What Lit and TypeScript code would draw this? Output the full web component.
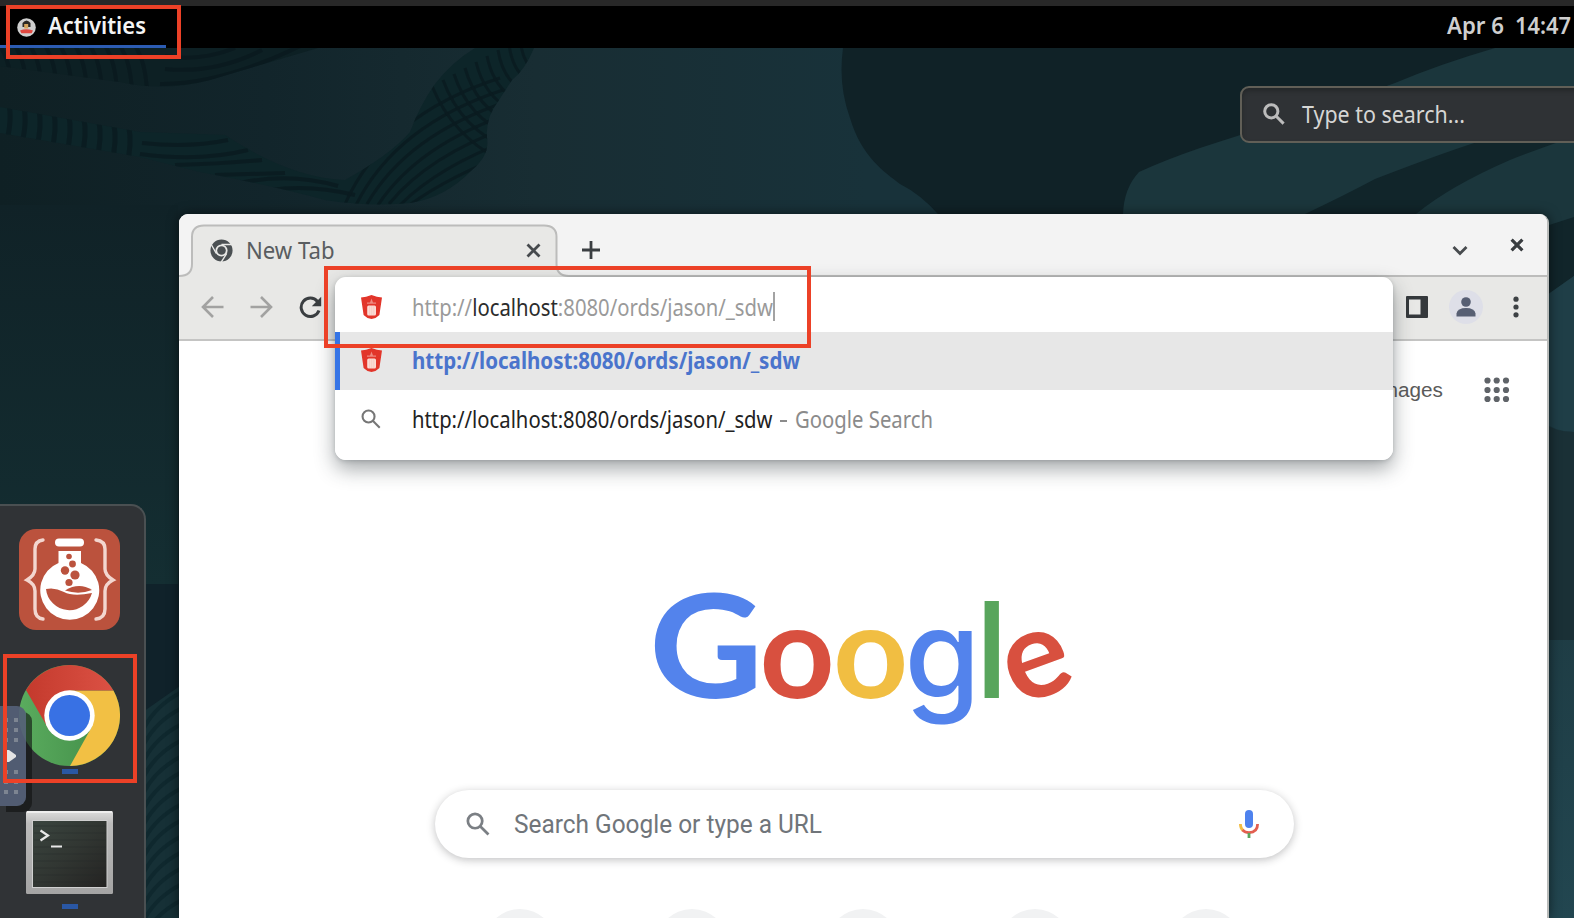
import { LitElement, html, svg, css } from "lit";
import { customElement } from "lit/decorators.js";

const UI = "'Noto Sans', 'Open Sans', sans-serif";

/** One line of text fitted to a given width; its cap height is centred in a 28px box. */
const label = (
  content: unknown,
  width: number,
  size = 23,
  color = "#000",
  weight = 400,
  family = UI
) => html`<svg class="label" width=${width} height="28" viewBox=${`0 0 ${width} 28`}>
  <text x="0" y="22.5" xml:space="preserve" font-family=${family} font-size=${size} font-weight=${weight}
    fill=${color} textLength=${width} lengthAdjust="spacingAndGlyphs">${content}</text></svg>`;

const magnifier = (size: number, color: string, stroke = 2.4) => html`<svg
  width=${size} height=${size} viewBox="0 0 22 22" fill="none" stroke=${color} stroke-width=${stroke}>
  <circle cx="8.3" cy="8.3" r="6.6" /><path d="M13 13l7.6 7.6" />
</svg>`;

const shield = html`<svg width="21" height="24" viewBox="0 0 21 24">
  <path d="M0 2.6Q5 2.2 10.5 0Q16 2.2 21 2.6L18.4 20L14.5 23L10.5 24L6.5 23L2.6 20Z" fill="#e2352a" />
  <path d="M6 7.4h3L10.5 3.6 12 7.4h3v1.4H6z" fill="#ee8a81" />
  <rect x="6.2" y="10.6" width="8.8" height="10" rx="1.5" fill="#fbdcd6" />
  <path d="M8.6 11v9M10.7 11v9M12.8 11v9" stroke="#f6c5bd" stroke-width=".7" />
</svg>`;

const BRAID =
  "M534 48Q525 70 505 85Q500 94 483 106Q522 112 526 138Q510 165 482 175Q455 200 415 203Q370 207 325 200Q270 185 200 172L140 157L0 133V107L140 132L225 135Q290 178 345 180Q390 155 408 132Q420 105 435 84Q452 62 475 48Z";
const BRAID_FILL =
  "M534 48Q525 70 512 80L499 100Q485 118 487 138Q490 155 472 170Q445 198 410 203Q370 207 325 200Q270 185 200 172L140 157L0 133V107L140 132L225 135Q290 178 345 180Q390 155 410 132Q420 105 435 84Q452 62 475 48Z";

@customElement("desk-wallpaper")
export class DeskWallpaper extends LitElement {
  static styles = css`
    :host { position: absolute; inset: 0; }
    svg { display: block; }
  `;
  render() {
    const ribs = Array.from({ length: 13 }, (_, i) => i);
    const waves = Array.from({ length: 9 }, (_, i) => i);
    return html`<svg width="1574" height="918" viewBox="0 0 1574 918">
      <defs>
        <linearGradient id="base" x1="0" y1="0" x2="1" y2="0">
          <stop offset="0" stop-color="#0f2024" /><stop offset=".17" stop-color="#12252b" />
          <stop offset=".34" stop-color="#182d33" /><stop offset=".55" stop-color="#18323a" />
        </linearGradient>
        <linearGradient id="left" x1="0" y1="0" x2="0" y2="1">
          <stop offset="0" stop-color="#102227" /><stop offset="1" stop-color="#142e32" />
        </linearGradient>
        <linearGradient id="right" x1="0" y1="0" x2="0" y2="1">
          <stop offset="0" stop-color="#1a3137" /><stop offset="1" stop-color="#224650" />
        </linearGradient>
        <clipPath id="braid"><path d=${BRAID_FILL} /></clipPath>
        <clipPath id="fringe"><path d="M0 48H318Q260 65 210 80Q165 92 120 82L0 66Z" /></clipPath>
      </defs>
      <rect width="1574" height="918" fill="url(#base)" />
      <rect y="205" width="178" height="380" fill="url(#left)" />
      <path d="M140 584H180V700L140 712Z" fill="#10222a" />
      <path d="M140 714L180 686V918H140Z" fill="#163036" />
      <g stroke="#0f282e" stroke-width="4" fill="none">
        ${Array.from({ length: 14 }, (_, i) => svg`<path d=${`M144 ${728 + i * 16}Q156 ${705 + i * 16} 182 ${692 + i * 16}`} />`)}
      </g>
      <path d="M0 48H318Q260 65 210 80Q165 92 120 82L0 66Z" fill="#0d2024" />
      <g clip-path="url(#fringe)" stroke="#0a191e" stroke-opacity=".8" stroke-width="4" fill="none">
        ${ribs.slice(0, 10).map((i) => svg`<path d=${`M${i * 15} 46Q${i * 15 + 10} 60 ${i * 15 + 12} 90`} />`)}
        <path d="M165 69Q215 74 262 50M160 84Q220 85 300 46M165 56Q200 62 235 48" />
      </g>
      <path d=${BRAID_FILL} fill="#0d2529" />
      <g clip-path="url(#braid)" stroke="#0a1b20" stroke-opacity=".85" stroke-width="4" fill="none">
        ${ribs.slice(0, 9).map((i) => svg`<path d=${`M${9 + i * 15} ${104 + i * 3}Q${12 + i * 15} ${120 + i * 3} ${7 + i * 15} ${140 + i * 3}`} stroke-width="5" />`)}
        <path d="M142 143Q190 148 228 140M140 154Q200 162 248 150M175 165Q220 164 262 160M215 175Q250 174 285 173M240 183Q290 172 338 186M270 190Q310 184 355 195" />
        ${waves.map((i) => svg`<path d=${`M${345 + i * 11} ${204 + (i % 2)}Q${385 + i * 11} ${115 + i * 10} ${500 + i * 3} ${78 + i * 12}`} stroke-width="3" />`)}
        ${waves.map((i) => svg`<path d=${`M${432 + i * 11} ${86 - i * 6}Q${452 + i * 9} ${135 - i * 6} ${500 + i * 9} ${160 - i * 11}`} stroke-width="3" />`)}
      </g>
      <path d="M843 48Q838 85 850 118C862 158 885 172 900 184Q920 194 938 214H1574V48Z" fill="#102227" />
      <path d="M1123 214Q1124 188 1139 172Q1165 160 1200 148Q1320 110 1395 83Q1440 64 1495 48H1574V300H1420Z" fill="#1b363c" />
      <path d="M1305 214Q1345 195 1375 179Q1450 150 1490 138H1570Q1530 152 1510 160Q1450 186 1416 214Z" fill="#11252a" />
      <path d="M1540 228L1574 217V276L1540 303Z" fill="#11252a" />
      <path d="M1540 300L1574 276V918H1540Z" fill="url(#right)" />
      <path d="M1540 300L1574 276V432Q1555 432 1540 420Z" fill="#1f3e47" />
      <path d="M1540 422Q1555 432 1574 432V640H1540Z" fill="#1a3036" />
    </svg>`;
  }
}

@customElement("top-panel")
export class TopPanel extends LitElement {
  static styles = css`
    :host { display: flex; justify-content: space-between; height: 42px; border-top: 6px solid #282828; background: #000; position: relative; }
    .activities { display: flex; align-items: flex-start; gap: 12px; width: 149px; padding: 5px 0 0 17px; height: 34px; border-bottom: 3px solid #2c5cb3; }
    .activities svg:first-child { margin-top: 7px; }
    .clock { display: flex; gap: 11px; padding: 5px 3px 0 0; }
    .label { overflow: visible; display: block; }
  `;
  render() {
    return html`
      <div class="activities">
        <svg width="19" height="19" viewBox="0 0 19 19">
          <circle cx="9.5" cy="9.5" r="9.3" fill="#cfcfcf" />
          <path d="M5.5 9V5Q9.5 0 13.500 5V9z" fill="#2b2824" />
          <rect x="7.200" y="6" width="4" height="4.500" fill="#d5a55c" />
          <path d="M3 12.500Q9 10 16 12.500L14.6 15.2H4.4z" fill="#e04840" />
        </svg>
        ${label("Activities", 98, 23.5, "#f4f4f4", 600)}
      </div>
      <div class="clock">
        ${label("Apr 6", 57, 23, "#cfcfcf", 600)} ${label("14:47", 56, 23, "#cfcfcf", 600)}
      </div>`;
  }
}

@customElement("shell-search")
export class ShellSearch extends LitElement {
  static styles = css`
    :host { position: absolute; left: 1240px; top: 86px; width: 350px; height: 57px; box-sizing: border-box; display: flex; align-items: center; gap: 17px; padding: 0 0 2px 21px; border: 2px solid #615f57; border-radius: 9px; background: #2f3235; box-shadow: inset 0 3px 4px #25282a; }
    .label { overflow: visible; display: block; }
  `;
  render() {
    return html`${magnifier(22, "#bcbcbc", 3)} ${label("Type to search...", 163, 23, "#d6d6d4")}`;
  }
}

@customElement("dash-dock")
export class DashDock extends LitElement {
  static styles = css`
    :host { position: absolute; left: 0; top: 504px; width: 146px; height: 414px; box-sizing: border-box; border: solid #4a5052; border-width: 2px 2px 0 0; border-radius: 0 15px 0 0; background: #303336; display: flex; flex-direction: column; align-items: center; padding: 23px 5px 0 0; }
    svg { display: block; flex: none; }
    .chrome { margin-top: 35px; }
    .term { margin-top: 37px; }
    .mark { width: 16px; height: 5px; background: #2a57a4; margin-top: 3px; flex: none; }
    .mark.low { margin-top: 10px; }
  `;
  render() {
    return html`
      <svg width="101" height="101" viewBox="0 0 101 101">
        <rect width="101" height="101" rx="17" fill="#bb523d" />
        <g fill="none" stroke="#f3d6cf" stroke-width="3.4" stroke-linecap="round">
          <path d="M24 11Q16 12 16 20V40Q16 46 8 51Q16 55 16 62V80Q16 89 24 90" />
          <path d="M77 11Q86 12 86 20V40Q86 46 94 51Q86 55 86 62V80Q86 89 77 90" />
        </g>
        <rect x="36" y="9.500" width="29" height="8" rx="4" fill="#fff" />
        <path d="M39.500 22H62V34A29.500 29.500 0 1 1 39.500 34Z" fill="#fff" />
        <path d="M27 60Q36 58 45 63T73 64A23.500 23.500 0 0 1 27 60Z" fill="#bb523d" />
        <path d="M46 61.500Q60 53 73 61Q60 66 46 61.500Z" fill="#bb523d" />
        <g fill="#bb523d"><circle cx="50" cy="27.500" r="2.800" /><circle cx="53.500" cy="35" r="3.400" /><circle cx="46" cy="41.500" r="4.200" /><circle cx="56" cy="46" r="4.600" /><circle cx="50" cy="53.500" r="3.600" /></g>
      </svg>
      <svg class="chrome" width="101" height="101" viewBox="-50.5 -50.5 101 101">
        <defs>
          <linearGradient id="r"><stop stop-color="#c43a2d" /><stop offset="1" stop-color="#db5144" /></linearGradient>
          <linearGradient id="g"><stop stop-color="#5aac5e" /><stop offset="1" stop-color="#408a46" /></linearGradient>
        </defs>
        <circle r="50.500" fill="url(#g)" />
        <path d="M0-25H43.900A50.500 50.500 0 0 1 .5 50.500L22 12Z" fill="#f2c044" />
        <path d="M-43.500-25.500A50.500 50.500 0 0 1 43.900-25H0V0L-21.600 12.500Z" fill="url(#r)" />
        <circle r="25.200" fill="#fff" /><circle r="20.500" fill="#3871e4" />
      </svg>
      <div class="mark"></div>
      <svg class="term" width="87" height="83" viewBox="0 0 87 83">
        <defs>
          <linearGradient id="f" x2="0" y2="1"><stop stop-color="#dcdcdc" /><stop offset=".15" stop-color="#bcbcbc" /><stop offset="1" stop-color="#a4a4a4" /></linearGradient>
          <linearGradient id="s" x2="1" y2="1"><stop stop-color="#3a453f" /><stop offset=".5" stop-color="#313632" /><stop offset="1" stop-color="#242322" /></linearGradient>
        </defs>
        <rect width="87" height="83" rx="1.500" fill="url(#f)" />
        <path d="M1 1H86" stroke="#eee" stroke-width="2" />
        <rect x="6" y="9" width="75.500" height="68" fill="#d0d0d0" />
        <rect x="7" y="10" width="73.500" height="66" fill="url(#s)" />
        ${Array.from({ length: 9 }, (_, i) => svg`<path d=${`M8 ${15 + i * 7}H80`} stroke="#252a27" stroke-opacity=".4" />`)}
        <path d="M14.500 19.500L22 24.500L14.500 29.500M25 35.500H36" fill="none" stroke="#e8e8e8" stroke-width="2.200" />
      </svg>
      <div class="mark low"></div>`;
  }
}

@customElement("side-handle")
export class SideHandle extends LitElement {
  static styles = css`
    :host { position: absolute; left: 0; top: 706px; width: 26px; height: 100px; border-radius: 0 9px 9px 0; background: rgba(84, 96, 118, 0.93); box-shadow: 6px 6px 0 rgba(16, 18, 18, 0.62); }
    svg { display: block; }
  `;
  render() {
    const rows = [14, 24, 34, 66, 76, 86];
    return html`<svg width="26" height="100" viewBox="0 0 26 100">
      ${rows.map((y) => svg`<g fill="#7d8592"><rect x="4" y=${y - 2} width="4" height="4" /><rect x="14" y=${y - 2} width="4" height="4" /></g>`)}
      <path d="M7 44H9L16 49V51L9 56H7Z" fill="#e4e4e4" />
    </svg>`;
  }
}

@customElement("omnibox-popup")
export class OmniboxPopup extends LitElement {
  static styles = css`
    :host { position: absolute; left: 155.5px; top: 63px; width: 1058px; height: 183px; border-radius: 11px; overflow: hidden; background: #fff; }
    .row { display: flex; align-items: center; height: 55px; padding: 4px 0 0 26px; box-sizing: border-box; }
    .row.active { background: #e7e7e7; height: 58px; border-left: 5px solid #3574e6; padding: 0 0 2px 21px; }
    .icon { width: 21px; margin-right: 30.500px; display: flex; justify-content: center; }
    .icon svg { display: block; }
    .caret { width: 2.500px; height: 29px; background: #a3a3a3; margin-left: -.5px; }
    .row.third { height: 58px; padding-top: 0; }
    .dash { width: 7px; height: 2px; background: #8b8b8b; margin: 4px 8px 0 7px; }
    .host { fill: #2c2c2c; }
    .label { overflow: visible; display: block; }
  `;
  render() {
    const address = svg`http://<tspan class="host">localhost</tspan>:8080/ords/jason/_sdw`;
    return html`
      <div class="row">
        <div class="icon">${shield}</div>
        ${label(address, 361, 23, "#9a9a9a")}
        <div class="caret"></div>
      </div>
      <div class="row active">
        <div class="icon">${shield}</div>
        ${label("http://localhost:8080/ords/jason/_sdw", 388, 23, "#4a74cc", 700)}
      </div>
      <div class="row third">
        <div class="icon">${magnifier(20, "#767676", 2.3)}</div>
        ${label("http://localhost:8080/ords/jason/_sdw", 360.5, 23, "#222")}
        <div class="dash"></div>
        ${label("Google Search", 138, 23, "#8b8b8b")}
      </div>`;
  }
}

@customElement("browser-window")
export class BrowserWindow extends LitElement {
  static styles = css`
    :host { position: absolute; left: 179px; top: 214px; width: 1370px; height: 704px; box-shadow: 0 0 12px rgba(0, 0, 0, 0.55); border-radius: 9px 9px 0 0; }
    .frame { position: relative; height: 704px; overflow: hidden; border-radius: 9px 9px 0 0; background: #fff; border-right: 2px solid #b9bbb9; box-sizing: border-box; display: flex; flex-direction: column; }
    .tabs { height: 63px; flex: none; position: relative; background: #f3f3f3; display: flex; justify-content: space-between; }
    .shape { position: absolute; left: 0; top: 0; }
    .tab { position: relative; display: flex; align-items: center; height: 50px; margin-top: 11px; padding-left: 31px; width: 562px; }
    .tab .label { margin: 0 191px 0 13px; }
    .tab .plus { margin-left: 41.5px; }
    .controls { position: relative; display: flex; gap: 42px; padding: 24px 23px 0 0; align-items: flex-start; }
    .controls .down { margin-top: 6px; }
    .tools { height: 64px; flex: none; box-sizing: border-box; background: #e8e8e6; border-bottom: 2px solid #c4c4c3; display: flex; align-items: center; justify-content: space-between; padding: 0 28px 2px 22px; }
    .nav { display: flex; gap: 26px; align-items: center; }
    .actions { display: flex; align-items: center; gap: 21px; }
    .avatar { width: 34px; height: 34px; border-radius: 50%; background: #dedfe8; display: flex; justify-content: center; align-items: center; }
    .actions .more { margin-left: 9px; }
    svg { display: block; flex: none; }
    .label { overflow: visible; }
    .page { flex: 1; display: flex; flex-direction: column; align-items: center; }
    .links { align-self: stretch; display: flex; justify-content: flex-end; align-items: center; height: 28px; padding: 35px 37px 0 0; gap: 41px; }
    .links .label { margin-top: -5px; }
    .logo { margin: 188px 0 0 -3px; }
    .box { width: 859px; height: 68px; box-sizing: border-box; border-radius: 34px; background: #fff; box-shadow: 0 2px 8px rgba(32, 33, 36, 0.28); display: flex; align-items: center; padding: 0 35px 0 31px; margin: 58px 0 0 2px; }
    .box .label { margin: 0 auto 0 24.5px; }
    .tiles { display: flex; gap: 99.500px; margin-top: 50.500px; }
    .tile { width: 72px; height: 72px; border-radius: 50%; background: #f1f2f3; }
    .pop { position: absolute; left: 156px; top: 63px; width: 1058px; height: 183px; border-radius: 11px; box-shadow: 0 9px 20px rgba(40, 50, 55, 0.42), 0 1px 4px rgba(40, 50, 55, 0.2); }
  `;
  render() {
    return html`<div class="frame">
      <div class="tabs">
        <svg class="shape" width="1368" height="63" viewBox="0 0 1368 63">
          <path d="M0 62Q13 62 13 50V23Q13 11.500 25 11.500H365Q377.500 11.500 377.500 23V50Q377.500 62 390 62H1368V64H0Z" fill="#e8e8e6" />
          <path d="M0 62Q13 62 13 50V23Q13 11.500 25 11.500H365Q377.500 11.500 377.500 23V50Q377.500 62 390 62H1368" fill="none" stroke="#bcbcbb" stroke-width="2" />
        </svg>
        <div class="tab">
          <svg width="23" height="23" viewBox="-11.5 -11.5 23 23">
            <circle r="8.600" fill="none" stroke="#4b5053" stroke-width="5" />
            <circle r="4.300" fill="#4b5053" />
            <g stroke="#e8e8e6" stroke-width="1.400"><path d="M0-6H11M5.200 3L-.5 12M-5.200 3L-10.500-6.500" /></g>
          </svg>
          ${label("New Tab", 88.5, 23, "#595d60")}
          <svg width="15" height="15" viewBox="0 0 15 15"><path d="M1.500 1.500L13.500 13.500M13.500 1.500L1.500 13.500" stroke="#464a4d" stroke-width="2.800" /></svg>
          <svg class="plus" width="18" height="18" viewBox="0 0 18 18"><path d="M9 0V18M0 9H18" stroke="#3a3e41" stroke-width="2.800" /></svg>
        </div>
        <div class="controls">
          <svg class="down" width="16" height="14" viewBox="0 0 16 14"><path d="M1.500 3L8 9.500L14.500 3" fill="none" stroke="#474b4e" stroke-width="2.800" /></svg>
          <svg width="14" height="14" viewBox="0 0 13 13"><path d="M1.500 1.500L11.500 11.500M11.500 1.500L1.500 11.500" stroke="#393d40" stroke-width="3" /></svg>
        </div>
      </div>
      <div class="tools">
        <div class="nav">
          <svg width="23" height="22" viewBox="0 0 23 22"><path d="M22.500 11H3M12 1L2 11L12 21" fill="none" stroke="#a2a2a1" stroke-width="2.600" /></svg>
          <svg width="23" height="22" viewBox="0 0 23 22"><path d="M.5 11H20M11 1L21 11L11 21" fill="none" stroke="#a2a2a1" stroke-width="2.600" /></svg>
          <svg width="23" height="23" viewBox="0 0 23 23"><path d="M18.500 5.500A9.200 9.200 0 1 0 20 14.500" fill="none" stroke="#3a3e41" stroke-width="3" /><path d="M22.200 .8V10.200H12.800Z" fill="#3a3e41" /></svg>
        </div>
        <div class="actions">
          <svg width="22" height="22" viewBox="0 0 22 22"><rect width="22" height="22" rx="1" fill="#35393c" /><rect x="3" y="3.500" width="11.500" height="15" fill="#e8e8e6" /></svg>
          <div class="avatar"><svg width="20" height="20" viewBox="0 0 20 20" fill="#575f73"><circle cx="10" cy="5" r="4.800" /><path d="M.5 19.500V16.500Q1.500 11 10 11T19.500 16.500V19.500Z" /></svg></div>
          <svg class="more" width="6" height="22" viewBox="0 0 6 22" fill="#3d4144"><circle cx="3" cy="3.200" r="2.600" /><circle cx="3" cy="11" r="2.600" /><circle cx="3" cy="18.800" r="2.600" /></svg>
        </div>
      </div>
      <div class="page">
        <div class="links">
          ${label("Images", 68, 20.5, "#5a5a5a", 400, "'Liberation Sans', Arial, sans-serif")}
          <svg width="26" height="26" viewBox="0 0 26 26" fill="#5f6368">${[3.5, 13, 22].map((y) => [3.5, 12.7, 22].map((x) => svg`<circle cx=${x} cy=${y} r="3.100" />`))}</svg>
        </div>
        <svg class="logo" width="414" height="140" viewBox="656 591 414 140" overflow="visible" font-family="Lato, sans-serif">
          <text transform="translate(650 697) scale(1.100 1)" font-size="143" font-weight="700" fill="#5383ec">G</text>
          <text transform="translate(760.500 697)" font-size="131" font-weight="700" fill="#d8503f">o</text>
          <text transform="translate(834 697)" font-size="131" font-weight="700" fill="#f1be42">o</text>
          <text transform="translate(905.500 697) scale(1.030 1.030)" font-size="119" font-weight="500" fill="#5383ec" font-family="Inter, sans-serif">g</text>
          <text transform="translate(976 697)" font-size="133" font-weight="500" fill="#58a55c" font-family="Inter, sans-serif">l</text>
          <text transform="translate(1018 705.500) rotate(-20)" font-size="124" font-weight="700" fill="#d8503f">e</text>
        </svg>
        <div class="box">
          ${magnifier(24, "#7b7f84", 2.5)}
          ${label("Search Google or type a URL", 308, 25, "#70757a", 400, "Roboto, sans-serif")}
          <svg width="20" height="28" viewBox="0 0 20 28" fill="none" stroke-width="2.800">
            <rect x="6" y="0" width="8" height="18" rx="4" fill="#4e82ee" />
            <path d="M1.400 14Q1.400 18 4 20.500" stroke="#f3bd42" /><path d="M3.500 20Q6 22.600 10 22.600Q18.600 22.300 18.600 14" stroke="#e25f50" />
            <path d="M10 23V28" stroke="#58a55c" />
          </svg>
        </div>
        <div class="tiles">${[0, 1, 2, 3, 4].map(() => html`<div class="tile"></div>`)}</div>
      </div>
      <div class="pop"></div>
      <omnibox-popup></omnibox-popup>
    </div>`;
  }
}

@customElement("app-root")
export class AppRoot extends LitElement {
  static styles = css`
    :host { display: block; position: relative; width: 1574px; height: 918px; overflow: hidden; background: #11242a; font-family: "Noto Sans", sans-serif; }
    .mark { position: absolute; box-sizing: border-box; border: 4px solid #ec4127; }
    .m1 { left: 6px; top: 5px; width: 175px; height: 54px; }
    .m2 { left: 324px; top: 266px; width: 487px; height: 82px; }
    .m3 { left: 3px; top: 654px; width: 134px; height: 129px; }
  `;
  render() {
    return html`
      <desk-wallpaper></desk-wallpaper>
      <top-panel></top-panel>
      <shell-search></shell-search>
      <browser-window></browser-window>
      <dash-dock></dash-dock>
      <side-handle></side-handle>
      <div class="mark m1"></div>
      <div class="mark m2"></div>
      <div class="mark m3"></div>`;
  }
}
